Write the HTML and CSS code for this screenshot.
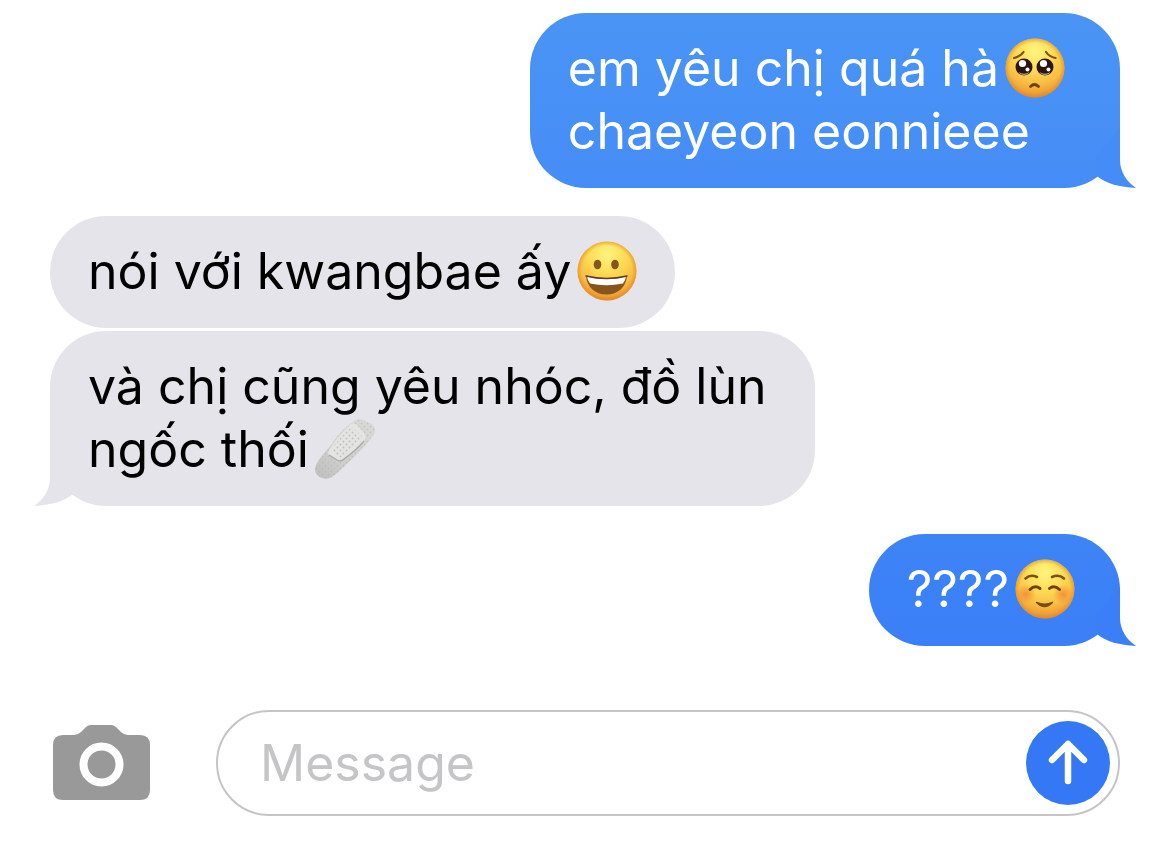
FILE: index.html
```html
<!DOCTYPE html>
<html lang="vi">
<head>
<meta charset="utf-8">
<meta name="viewport" content="width=device-width, initial-scale=1">
<title>Messages</title>
<link rel="stylesheet" href="styles.css">
</head>
<body>
<svg class="defs" aria-hidden="true">
  <defs>
    <radialGradient id="face" cx=".5" cy=".22" r=".8">
      <stop offset="0" stop-color="#fff580"/>
      <stop offset=".35" stop-color="#fddf58"/>
      <stop offset=".7" stop-color="#f8bd42"/>
      <stop offset=".9" stop-color="#ee9c33"/>
      <stop offset="1" stop-color="#de8528"/>
    </radialGradient>
    <radialGradient id="rim">
      <stop offset=".85" stop-color="#e08a25" stop-opacity="0"/>
      <stop offset="1" stop-color="#e08a25" stop-opacity=".6"/>
    </radialGradient>
    <radialGradient id="cheek">
      <stop offset="0" stop-color="#f0702e" stop-opacity=".6"/>
      <stop offset="1" stop-color="#f0702e" stop-opacity="0"/>
    </radialGradient>
    <linearGradient id="strip" x1="0" y1="1" x2="1" y2="0">
      <stop offset="0" stop-color="#bdbdbb"/>
      <stop offset=".35" stop-color="#cececc"/>
      <stop offset="1" stop-color="#dadad9"/>
    </linearGradient>
    <pattern id="holes" width="6" height="6" patternUnits="userSpaceOnUse">
      <circle cx="1.5" cy="1.5" r=".9" fill="#b0b0ae"/>
      <circle cx="4.5" cy="4.5" r=".9" fill="#b0b0ae"/>
    </pattern>
  </defs>
</svg>
<div class="chat">
  <main class="thread">
    <div class="group group--out">
      <p class="bubble bubble--out bubble--out-multi">em yêu chị quá hà<svg class="emoji" viewBox="0 0 60 60" role="img" aria-label="pleading face">
          <circle cx="30" cy="30" r="29.5" fill="url(#face)"/>
          <circle cx="30" cy="30" r="29.5" fill="url(#rim)"/>
          <path d="M9 20Q15.500 18.500 18.500 14M50.500 20Q44 18.500 41 14" fill="none" stroke="#80501a" stroke-width="2.200" stroke-linecap="round"/>
          <circle cx="19" cy="29" r="8.500" fill="#2d160e"/><circle cx="40" cy="29" r="8.500" fill="#2d160e"/>
          <path d="M13.500 34Q19 37.500 24.500 34Q22.500 37 19 37T13.500 34ZM34.500 34Q40 37.500 45.500 34Q43.500 37 40 37T34.500 34Z" fill="#ada69c"/>
          <circle cx="17.500" cy="25.500" r="3.600" fill="#fff"/><circle cx="38.500" cy="25.500" r="3.600" fill="#fff"/>
          <circle cx="22.500" cy="31.500" r="2" fill="#fff"/><circle cx="43.500" cy="31.500" r="2" fill="#fff"/>
          <path d="M25.500 48.500Q29.500 44.500 33.500 48.500" fill="none" stroke="#70410f" stroke-width="2.800" stroke-linecap="round"/>
        </svg><br>chaeyeon eonnieee<svg class="tail" viewBox="0 0 40 60" aria-hidden="true"><path d="M0 30L24 0V32C24 44 31 54 40 60C24 59 10 56 1 48Z"/></svg></p>
    </div>
    <div class="group group--in">
      <p class="bubble bubble--in">nói với kwangbae ấy<svg class="emoji" viewBox="0 0 60 60" role="img" aria-label="grinning face">
          <circle cx="30" cy="30" r="29.500" fill="url(#face)"/>
          <circle cx="30" cy="30" r="29.5" fill="url(#rim)"/>
          <ellipse cx="20.500" cy="23.500" rx="3.800" ry="4.800" fill="#87561f"/><ellipse cx="38" cy="23.500" rx="3.800" ry="4.800" fill="#87561f"/>
          <path d="M9 35Q29.500 40 50 35C49 46 41 53.500 29.500 53.500S10 46 9 35Z" fill="#88551a"/>
          <path d="M10 35.500Q29.500 40 49 35.500Q48.500 39 46 42.500Q29.500 46 13 42.500Q10.500 39 10 35.500Z" fill="#fff"/>
          <path d="M9 35Q29.500 40 50 35" fill="none" stroke="#5d3d22" stroke-width="1.500" stroke-linecap="round"/>
        </svg></p>
      <p class="bubble bubble--in bubble--in-multi">và chị cũng yêu nhóc, đồ lùn<br>ngốc thối<svg class="emoji" viewBox="0 0 60 60" role="img" aria-label="adhesive bandage">
          <path d="M1 46C4 40 9 34 16 26C22 17 29 9 38 3Q43 -1 48 1L57 5Q61 8 60 14C54 23 46 31 38 39C31 46 24 53 17 58Q12 61 7 59Q1 57 0 51Q0 48 1 46Z" fill="url(#strip)"/>
          <path d="M1 46C4 40 9 34 16 26C22 17 29 9 38 3Q43 -1 48 1L57 5Q61 8 60 14C54 23 46 31 38 39C31 46 24 53 17 58Q12 61 7 59Q1 57 0 51Q0 48 1 46Z" fill="url(#holes)" opacity=".5"/>
          <path d="M14 31C21 20 28 12 36 5Q39 3 42 6L50 15Q52 18 49 22C43 29 36 35 29 40Q26 43 22 41L15 37Q12 35 14 31Z" fill="#e4e4e3"/>
          <path d="M16 31C22 22 29 14 37 8L48 18C42 26 34 33 26 39Z" fill="url(#holes)" opacity=".75"/>
          <path d="M14 36L22 41Q26 43 29 40C36 35 43 29 49 22" fill="none" stroke="#a9a9a8" stroke-width="1.300"/>
        </svg><svg class="tail tail--left" viewBox="0 0 40 60" aria-hidden="true"><path d="M0 30L24 0V32C24 44 31 54 40 60C24 59 10 56 1 48Z"/></svg></p>
    </div>
    <div class="group group--out">
      <p class="bubble bubble--out bubble--latest">????<svg class="emoji" viewBox="0 0 60 60" role="img" aria-label="smiling face">
          <circle cx="30" cy="30" r="29.500" fill="url(#face)"/>
          <circle cx="30" cy="30" r="29.5" fill="url(#rim)"/>
          <circle cx="11" cy="35" r="10" fill="url(#cheek)"/><circle cx="48" cy="35" r="10" fill="url(#cheek)"/>
          <path d="M10.500 19.500Q15.500 15 22 18M37 18Q44 15 49 19.500" fill="none" stroke="#80501a" stroke-width="2.600" stroke-linecap="round"/>
          <path d="M15 30.500Q20 25.500 25 29.500M34.500 29.500Q39 25.500 44.500 30.500" fill="none" stroke="#70410f" stroke-width="3" stroke-linecap="round"/>
          <path d="M21.500 43.500Q29.500 51.500 37.500 43.500Q29.500 47 21.500 43.500Z" fill="#7c4b14" stroke="#7c4b14" stroke-width="1.500" stroke-linejoin="round"/>
        </svg><svg class="tail" viewBox="0 0 40 60" aria-hidden="true"><path d="M0 30L24 0V32C24 44 31 54 40 60C24 59 10 56 1 48Z"/></svg></p>
    </div>
  </main>
  <form class="composer">
    <button class="camera" type="button" aria-label="Camera">
      <svg viewBox="0 0 98 76" aria-hidden="true">
        <path d="M10 10H21Q25 10 28 7L33 2Q35 0 38 0H58Q61 0 63 2L68 7Q71 10 75 10H87Q97 10 97 20V65Q97 75 87 75H10Q0 75 0 65V20Q0 10 10 10Z" fill="#999"/>
        <circle cx="48.500" cy="39.500" r="18" fill="none" stroke="#fff" stroke-width="8"/>
      </svg>
    </button>
    <div class="field">
      <input class="field__input" type="text" placeholder="Message" aria-label="Message">
      <button class="send" type="button" aria-label="Send">
        <svg viewBox="0 0 84 84" aria-hidden="true">
          <path d="M42 60V23M26 39L42 23L58 39" fill="none" stroke="#fff" stroke-width="6.500" stroke-linecap="round" stroke-linejoin="round"/>
        </svg>
      </button>
    </div>
  </form>
</div>
</body>
</html>
```
FILE: styles.css
```css
* { box-sizing: border-box; }

body {
  margin: 0;
  background: #fff;
  color: #000;
  font-family: Inter, "Noto Sans", sans-serif;
  font-size: 50px;
  line-height: 63px;
}

.defs { position: absolute; width: 0; height: 0; }

.chat {
  display: flex;
  flex-direction: column;
  gap: 64px;
  padding: 13px 50px 27px;
}

.thread {
  display: flex;
  flex-direction: column;
  gap: 28px;
}

.group {
  display: flex;
  flex-direction: column;
  gap: 3px;
}
.group--in { align-items: flex-start; }
.group--out { align-items: flex-end; }

.bubble {
  position: relative;
  margin: 0;
  padding: 24px 38px 25px;
  border-radius: 56px;
}
.bubble--in {
  background: #e5e4ea;
  fill: #e5e4ea;
}
.bubble--in-multi { padding-right: 48px; }
.bubble--out {
  padding-right: 45px;
  color: #fff;
  background: linear-gradient(#4a94f5, #458df6);
  fill: #458df6;
}
.bubble--out-multi { padding-right: 55px; }
.bubble--latest {
  background: linear-gradient(#3d84f6, #3a7ff7);
  fill: #3a7ff7;
}

.tail {
  position: absolute;
  right: -16px;
  bottom: 0;
  width: 40px;
  height: 60px;
}
.tail--left {
  right: auto;
  left: -16px;
  transform: scaleX(-1);
}

.emoji {
  width: 60px;
  height: 60px;
  margin-left: 6px;
  vertical-align: -12px;
  overflow: visible;
}

.composer {
  display: flex;
  align-items: center;
  gap: 63px;
}

.camera,
.send {
  display: flex;
  flex: none;
  padding: 0;
  border: 0;
  background: none;
  cursor: pointer;
}
.camera {
  width: 103px;
  justify-content: center;
}
.camera svg { width: 98px; height: 76px; }

.field {
  display: flex;
  flex: 1;
  align-items: center;
  min-width: 0;
  padding: 9px 8px 9px 42px;
  border: 2px solid #c5c5c7;
  border-radius: 53px;
}
.field__input {
  flex: 1;
  min-width: 0;
  padding: 0;
  border: 0;
  outline: 0;
  background: none;
  color: #000;
  font: inherit;
}
.field__input::placeholder { color: #c5c5c7; opacity: 1; }

.send {
  width: 84px;
  height: 84px;
  border-radius: 50%;
  background: #3478f6;
}
.send svg { width: 84px; height: 84px; }
```
